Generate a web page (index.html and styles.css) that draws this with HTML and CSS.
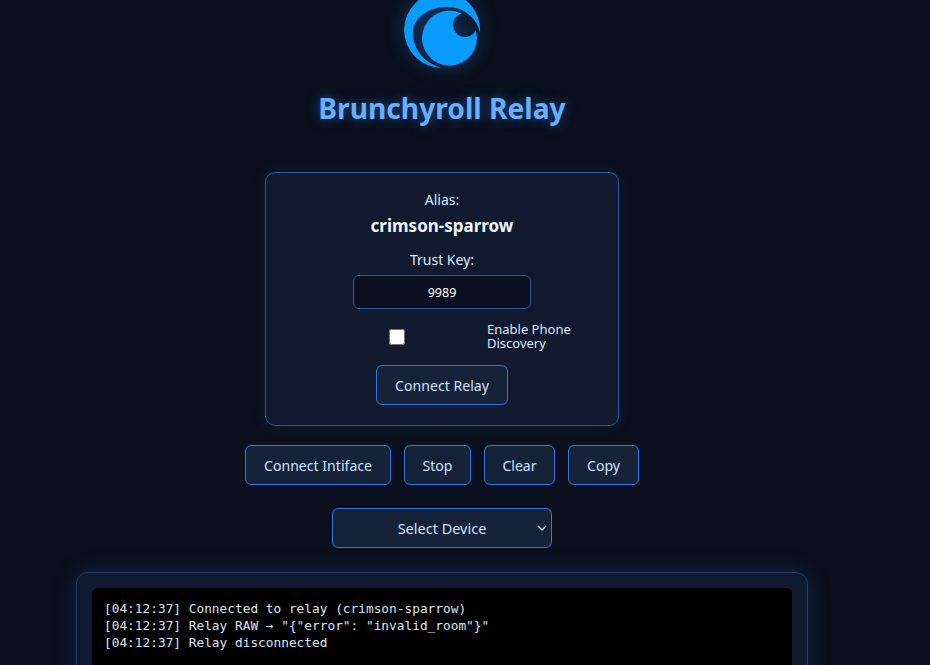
FILE: index.html
```html
<!DOCTYPE html>
<html lang="en">
<head>
<meta charset="utf-8">
<title>Brunchyroll Relay</title>
<link rel="stylesheet" href="styles.css">
</head>
<body>
<main class="page">
  <svg class="logo" viewBox="382 0 120 69" width="120" height="69" aria-label="Brunchyroll logo">
    <path class="logo-blue" d="M480 33 A38 38 0 1 0 443 68 C425 64 413 50 413 33 C413 18 428 7 447 7 C464 7 477 18 480 33 Z"/>
    <path class="logo-blue" d="M461.84 13.42 A27.5 27.5 0 1 0 475.84 30.12 A12 12 0 1 1 461.84 13.42 Z"/>
  </svg>
  <h1 class="title">Brunchyroll Relay</h1>
  <section class="card">
    <div class="field-label">Alias:</div>
    <div class="alias">crimson-sparrow</div>
    <label class="field-label key-label" for="key">Trust Key:</label>
    <input class="key" id="key" type="text" value="9989">
    <label class="discovery">
      <input class="check" type="checkbox">
      <span class="discovery-text">Enable Phone Discovery</span>
    </label>
    <button class="btn">Connect Relay</button>
  </section>
  <div class="actions">
    <button class="btn">Connect Intiface</button>
    <button class="btn">Stop</button>
    <button class="btn">Clear</button>
    <button class="btn">Copy</button>
  </div>
  <select class="device"><option>Select Device</option></select>
  <section class="log-panel">
    <pre class="log">[04:12:37] Connected to relay (crimson-sparrow)
[04:12:37] Relay RAW → "{"error": "invalid_room"}"
[04:12:37] Relay disconnected</pre>
  </section>
</main>
</body>
</html>
```
FILE: styles.css
```css
* { box-sizing: border-box; }
html, body { height: 100%; }
body {
  margin: 0;
  height: 665px;
  overflow: hidden;
  background: #0a101d;
  color: #dbeafe;
  font-family: "Noto Sans", "Open Sans", sans-serif;
  font-size: 14px;
}
.page {
  width: 884px;
  display: flex;
  flex-direction: column;
  align-items: center;
}
.logo {
  display: block;
  filter: drop-shadow(0 0 9px rgba(40, 140, 255, .35));
}
.logo-blue { fill: #0a9bff; }
.title {
  margin: 19px 0 0;
  height: 40px;
  line-height: 40px;
  color: #66b0ff;
  font-size: 28.2px;
  font-weight: 700;
  white-space: nowrap;
  text-shadow: 0 0 12px rgba(64, 140, 255, .5);
}
.card {
  margin-top: 44px;
  width: 354px;
  height: 254px;
  padding: 17px 0 0;
  display: flex;
  flex-direction: column;
  align-items: center;
  background: #111a2e;
  border: 1px solid #2f569b;
  border-radius: 10px;
  box-shadow: 0 0 14px rgba(40, 90, 180, .2);
}
.field-label { line-height: 20px; font-size: 14px; }
.alias {
  margin-top: 4px;
  line-height: 24px;
  font-size: 17px;
  font-weight: 700;
  color: #eef4ff;
}
.key-label { margin-top: 12px; }
.key {
  margin-top: 5px;
  width: 178px;
  height: 34px;
  background: #0a1020;
  border: 1px solid #2f569b;
  border-radius: 6px;
  color: #fff;
  text-align: center;
  font: 12.5px "Noto Sans", sans-serif;
}
.discovery {
  margin-top: 13px;
  width: 290px;
  display: flex;
  align-items: center;
  gap: 82px;
  font-size: 13px;
  line-height: 14px;
  padding-left: 92px;
}
.check { margin: 2px 0 0; width: 16px; height: 16px; flex: none; }
.discovery-text { width: 96px; }
.btn {
  height: 40px;
  padding: 0;
  background: #162238;
  border: 1px solid #3b74e0;
  border-radius: 6px;
  color: #cfe3ff;
  font: 14.1px "Noto Sans", sans-serif;
}
.card .btn { margin-top: 15px; width: 132px; }
.actions {
  margin-top: 19px;
  display: grid;
  grid-template-columns: 146px 67px 71px 71px;
  gap: 13px;
}
.device {
  margin-top: 23px;
  width: 220px;
  height: 40px;
  appearance: none;
  padding: 0 12px;
  background: #162238 url("data:image/svg+xml,%3Csvg xmlns='http://www.w3.org/2000/svg' width='10' height='6' viewBox='0 0 10 6'%3E%3Cpath d='M1 1l4 4 4-4' fill='none' stroke='%23cfe3ff' stroke-width='1.4'/%3E%3C/svg%3E") no-repeat right 4px center;
  border: 1px solid #3b74e0;
  border-radius: 6px;
  color: #cfe3ff;
  text-align: center;
  font: 14.5px "Noto Sans", sans-serif;
}
.log-panel {
  margin-top: 24px;
  width: 732px;
  padding: 15px;
  background: #0f1a2e;
  border: 1px solid #243f70;
  border-radius: 12px;
  box-shadow: 0 0 22px rgba(40, 100, 200, .25);
}
.log {
  margin: 0;
  height: 200px;
  padding: 12px;
  background: #000;
  border-radius: 6px;
  color: #d8e6f7;
  font: 12.8px/17px "DejaVu Sans Mono", monospace;
}
```
